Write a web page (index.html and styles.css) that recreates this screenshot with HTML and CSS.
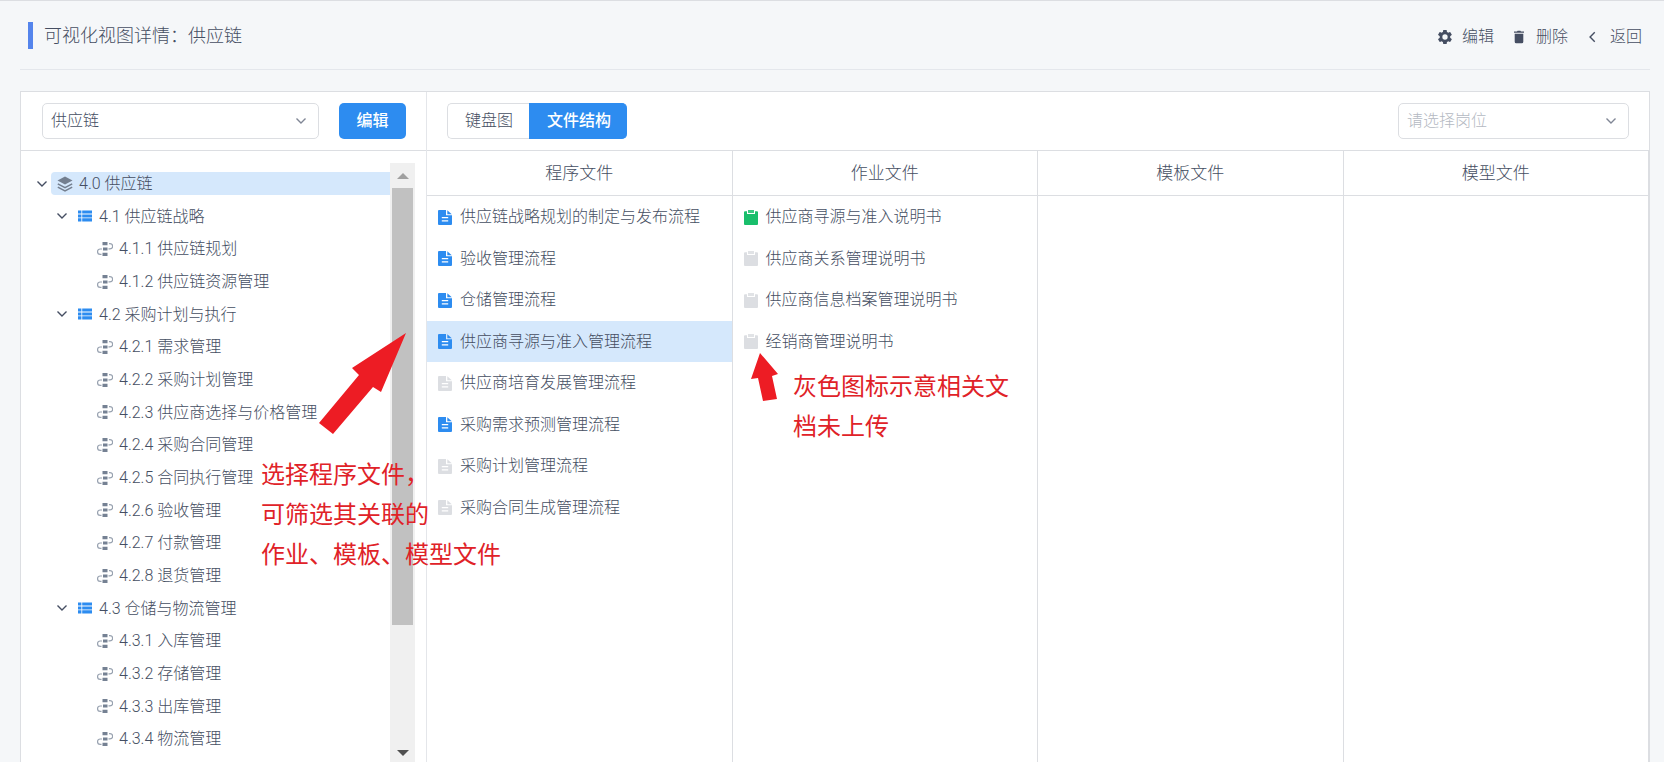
FILE: index.html
```html
<!DOCTYPE html>
<html lang="zh-CN">
<head>
<meta charset="utf-8">
<title>可视化视图详情</title>
<link rel="stylesheet" href="styles.css">
</head>
<body>
<svg class="sprite" aria-hidden="true">
  <symbol id="chevron" viewBox="0 0 12 12"><path d="M1.5 3.5 6 8l4.500-4.500" fill="none" stroke="currentColor" stroke-width="1.400"/></symbol>
  <symbol id="back" viewBox="0 0 12 12"><path d="M7.500 2 3.500 6l4 4" fill="none" stroke="currentColor" stroke-width="1.200"/></symbol>
  <symbol id="gear" viewBox="2 2 20 20"><path fill="currentColor" d="M19.400 13a7.500 7.500 0 0 0 0-2l2.100-1.700c.2-.2.300-.4.100-.7l-2-3.400c-.1-.2-.4-.3-.6-.2l-2.500 1a7.300 7.300 0 0 0-1.700-1l-.4-2.600c0-.3-.2-.4-.5-.4h-4c-.2 0-.4.1-.5.4L9 5c-.6.200-1.200.6-1.700 1l-2.500-1c-.2-.1-.5 0-.6.2l-2 3.400c-.1.300 0 .5.100.7L4.500 11a8 8 0 0 0 0 2l-2.200 1.700c-.1.200-.2.400-.1.700l2 3.400c.1.200.4.300.6.200l2.500-1c.5.400 1.100.8 1.700 1l.4 2.600c.1.300.3.400.5.400h4c.3 0 .5-.1.500-.4l.4-2.600c.6-.2 1.200-.6 1.700-1l2.500 1c.2.100.5 0 .6-.2l2-3.400c.2-.3.100-.5-.1-.7zM12 15.800a3.800 3.800 0 1 1 0-7.600 3.800 3.800 0 0 1 0 7.600z"/></symbol>
  <symbol id="trash" viewBox="0 0 12 14"><path fill="currentColor" d="M1 1.500h3L4.600.7h2.800l.6.800h3v1.300H1zM1.700 3.700h8.600v8q0 1.500-1.500 1.500H3.200q-1.500 0-1.500-1.500z"/></symbol>
  <symbol id="layers" viewBox="0 0 16 16"><path fill="currentColor" d="M8 .5 15.500 4.500 8 8.500.5 4.500z"/><path fill="none" stroke="currentColor" stroke-width="1.500" d="m.8 7.900 7.200 3.800 7.200-3.800M.8 11.200 8 15l7.200-3.800"/></symbol>
  <symbol id="list" viewBox="0 0 14 12"><path fill="currentColor" d="M0 .5h3.400v3H0zM4.200.5H14v3H4.200zM0 4.400h3.400v3H0zM4.200 4.400H14v3H4.200zM0 8.300h3.400v3.200H0zM4.200 8.300H14v3.200H4.200z"/></symbol>
  <symbol id="flow" viewBox="0 0 16 14"><path fill="#758193" d="M5.500 0h5v3.200h-5zM6 5.400h4.500v3H6zM5.500 10.800h5V14h-5z"/><path fill="none" stroke="#98a2b0" stroke-width="1.200" d="M12 1.600h1a2.600 2.600 0 0 1 0 5.300h-1.500M5 7H3.200a2.600 2.600 0 0 0 0 5.300h1.300"/></symbol>
  <symbol id="doc" viewBox="0 0 14 15"><path fill="currentColor" d="M1 0h7v5.300h6V14q0 1-1 1H1q-1 0-1-1V1Q0 0 1 0z"/><path fill="currentColor" d="M9.300.2 13.800 4.300H9.300z"/><path d="M3.800 7.600h6.400M3.800 10.800h6.400" stroke="#fff" stroke-width="1.300"/></symbol>
  <symbol id="clip" viewBox="0 0 14 15"><path fill="currentColor" d="M1 1.200h2V4h8V1.200h2q1 0 1 1V14q0 1-1 1H1q-1 0-1-1V2.200q0-1 1-1z"/><path fill="currentColor" opacity=".85" d="M4 0h6v3H4z"/></symbol>
</svg>

<div class="page">
  <header class="page-head">
    <h1>可视化视图详情：供应链</h1>
    <nav class="actions">
      <button type="button"><svg class="i14"><use href="#gear"/></svg>编辑</button>
      <button type="button"><svg class="i14"><use href="#trash"/></svg>删除</button>
      <button type="button"><svg class="i14"><use href="#back"/></svg>返回</button>
    </nav>
  </header>

  <main class="card">
    <aside class="side">
      <div class="toolbar">
        <div class="picker grow">
          <select aria-label="视图"><option>供应链</option></select>
          <svg><use href="#chevron"/></svg>
        </div>
        <button type="button" class="primary">编辑</button>
      </div>
      <div class="tree-area">
        <ul class="tree">
          <li class="l0"><svg class="chev"><use href="#chevron"/></svg><span class="node on"><svg class="i16"><use href="#layers"/></svg>4.0 供应链</span></li>
          <li class="l1"><svg class="chev"><use href="#chevron"/></svg><span class="node"><svg class="i14"><use href="#list"/></svg>4.1 供应链战略</span></li>
          <li class="l2"><span class="node"><svg class="i16"><use href="#flow"/></svg>4.1.1 供应链规划</span></li>
          <li class="l2"><span class="node"><svg class="i16"><use href="#flow"/></svg>4.1.2 供应链资源管理</span></li>
          <li class="l1"><svg class="chev"><use href="#chevron"/></svg><span class="node"><svg class="i14"><use href="#list"/></svg>4.2 采购计划与执行</span></li>
          <li class="l2"><span class="node"><svg class="i16"><use href="#flow"/></svg>4.2.1 需求管理</span></li>
          <li class="l2"><span class="node"><svg class="i16"><use href="#flow"/></svg>4.2.2 采购计划管理</span></li>
          <li class="l2"><span class="node"><svg class="i16"><use href="#flow"/></svg>4.2.3 供应商选择与价格管理</span></li>
          <li class="l2"><span class="node"><svg class="i16"><use href="#flow"/></svg>4.2.4 采购合同管理</span></li>
          <li class="l2"><span class="node"><svg class="i16"><use href="#flow"/></svg>4.2.5 合同执行管理</span></li>
          <li class="l2"><span class="node"><svg class="i16"><use href="#flow"/></svg>4.2.6 验收管理</span></li>
          <li class="l2"><span class="node"><svg class="i16"><use href="#flow"/></svg>4.2.7 付款管理</span></li>
          <li class="l2"><span class="node"><svg class="i16"><use href="#flow"/></svg>4.2.8 退货管理</span></li>
          <li class="l1"><svg class="chev"><use href="#chevron"/></svg><span class="node"><svg class="i14"><use href="#list"/></svg>4.3 仓储与物流管理</span></li>
          <li class="l2"><span class="node"><svg class="i16"><use href="#flow"/></svg>4.3.1 入库管理</span></li>
          <li class="l2"><span class="node"><svg class="i16"><use href="#flow"/></svg>4.3.2 存储管理</span></li>
          <li class="l2"><span class="node"><svg class="i16"><use href="#flow"/></svg>4.3.3 出库管理</span></li>
          <li class="l2"><span class="node"><svg class="i16"><use href="#flow"/></svg>4.3.4 物流管理</span></li>
        </ul>
        <div class="scrollbar" aria-hidden="true">
          <i class="up"></i>
          <div class="track"><div class="thumb"></div></div>
          <i class="down"></i>
        </div>
      </div>
    </aside>

    <section class="content">
      <div class="toolbar">
        <div class="tabs">
          <button type="button">键盘图</button>
          <button type="button" class="active">文件结构</button>
        </div>
        <div class="picker post">
          <select class="empty" aria-label="岗位"><option>请选择岗位</option></select>
          <svg><use href="#chevron"/></svg>
        </div>
      </div>
      <div class="columns">
        <section class="column">
          <h2>程序文件</h2>
          <ul class="files">
            <li class="blue"><svg><use href="#doc"/></svg>供应链战略规划的制定与发布流程</li>
            <li class="blue"><svg><use href="#doc"/></svg>验收管理流程</li>
            <li class="blue"><svg><use href="#doc"/></svg>仓储管理流程</li>
            <li class="blue selected"><svg><use href="#doc"/></svg>供应商寻源与准入管理流程</li>
            <li><svg><use href="#doc"/></svg>供应商培育发展管理流程</li>
            <li class="blue"><svg><use href="#doc"/></svg>采购需求预测管理流程</li>
            <li><svg><use href="#doc"/></svg>采购计划管理流程</li>
            <li><svg><use href="#doc"/></svg>采购合同生成管理流程</li>
          </ul>
        </section>
        <section class="column">
          <h2>作业文件</h2>
          <ul class="files">
            <li class="green"><svg><use href="#clip"/></svg>供应商寻源与准入说明书</li>
            <li><svg><use href="#clip"/></svg>供应商关系管理说明书</li>
            <li><svg><use href="#clip"/></svg>供应商信息档案管理说明书</li>
            <li><svg><use href="#clip"/></svg>经销商管理说明书</li>
          </ul>
        </section>
        <section class="column"><h2>模板文件</h2></section>
        <section class="column"><h2>模型文件</h2></section>
      </div>
    </section>
  </main>
</div>

<svg class="arrow arrow-select" viewBox="0 0 88 102" aria-hidden="true"><path d="M87 1 33 36l7 7L0 91l14 11 40-47 8 5z"/></svg>
<p class="note note-select">选择程序文件，<br>可筛选其关联的<br>作业、模板、模型文件</p>
<svg class="arrow arrow-gray" viewBox="0 0 28 48" aria-hidden="true"><path d="M9 0 0 26l7-1 5 23 14-2-5-23 6-2z"/></svg>
<p class="note note-gray">灰色图标示意相关文<br>档未上传</p>
</body>
</html>
```
FILE: styles.css
```css
* { box-sizing: border-box; }
body {
  margin: 0;
  background: #f5f7f9;
  color: #454e62;
  font: 300 16px/24px Roboto, "Noto Sans CJK SC", sans-serif;
  overflow: hidden;
}
h1, h2, ul, p { margin: 0; padding: 0; font-weight: inherit; }
ul { list-style: none; }
svg { display: block; flex: none; }
button, select { font: inherit; color: inherit; }
.sprite { position: absolute; width: 0; height: 0; }
.i14 { width: 14px; height: 14px; }
.i16 { width: 16px; height: 16px; }

.page {
  display: flex;
  flex-direction: column;
  height: 100vh;
  padding: 0 14px 0 20px;
  border-top: 1px solid #dcdee2;
}
.page-head {
  flex: none;
  display: flex;
  align-items: center;
  justify-content: space-between;
  height: 69px;
  padding: 0 8px;
  border-bottom: 1px solid #e4e7ec;
}
.page-head h1 {
  border-left: 5px solid #5484ec;
  padding-left: 11px;
  font-size: 18px;
  line-height: 27px;
}
.actions { display: flex; gap: 18px; padding-top: 4px; }
.actions button {
  display: flex;
  align-items: center;
  gap: 10px;
  padding: 0;
  border: 0;
  background: none;
}

.card {
  flex: 1;
  min-height: 0;
  display: flex;
  margin-top: 21px;
  border: 1px solid #dcdee2;
  border-bottom: 0;
  background: #fff;
}
.side {
  flex: none;
  width: 406px;
  display: flex;
  flex-direction: column;
  border-right: 1px solid #e4e6ea;
}
.content { flex: 1; min-width: 0; display: flex; flex-direction: column; }
.toolbar {
  flex: none;
  display: flex;
  align-items: center;
  justify-content: space-between;
  gap: 20px;
  height: 59px;
  padding: 0 20px;
  border-bottom: 1px solid #dcdee2;
}
.side .toolbar { padding-left: 21px; }
.picker { display: grid; align-items: center; }
.picker > * { grid-area: 1 / 1; }
.picker select {
  appearance: none;
  width: 100%;
  height: 36px;
  padding: 0 8px;
  border: 1px solid #dcdee2;
  border-radius: 5px;
  background: #fff;
}
.picker select.empty { color: #b4b9c2; }
.picker svg {
  justify-self: end;
  width: 12px;
  height: 12px;
  margin-right: 12px;
  color: #808695;
  pointer-events: none;
}
.grow { flex: 1; }
.post { width: 231px; }
.primary {
  width: 67px;
  height: 36px;
  padding: 0;
  border: 0;
  border-radius: 5px;
  background: #2d8cf0;
  color: #fff;
  font-weight: 500;
}
.tabs { display: flex; }
.tabs button {
  height: 36px;
  padding: 0 16px 0 17px;
  border: 1px solid #dcdee2;
  border-right: 0;
  border-radius: 5px 0 0 5px;
  background: #fff;
}
.tabs .active {
  border-color: #2d8cf0;
  border-radius: 0 5px 5px 0;
  background: #2d8cf0;
  color: #fff;
  font-weight: 500;
}

.tree-area {
  flex: 1;
  min-height: 0;
  display: flex;
  padding: 12px 11px 0 15px;
}
.tree { flex: 1; min-width: 0; padding-top: 4px; }
.tree li { display: flex; align-items: center; height: 33px; }
.tree li:nth-child(3n + 2) { height: 32px; }
.tree .l1 { padding-left: 20px; }
.tree .l2 { padding-left: 54px; }
.chev { width: 12px; height: 12px; margin-right: 3px; }
.node {
  flex: 1;
  display: flex;
  align-items: center;
  gap: 6px;
  padding-left: 7px;
  line-height: 23px;
  white-space: nowrap;
}
.l1 .node { gap: 7px; }
.node.on { padding-left: 6px; border-radius: 4px 0 0 4px; background: #d5e8fc; }
.on svg { color: #747f8f; }
.l1 .i14 { color: #2d8cf0; }
.scrollbar {
  flex: none;
  width: 25px;
  display: flex;
  flex-direction: column;
  align-items: center;
  background: #f0f0f0;
}
.scrollbar i { border: 6px solid transparent; border-top-width: 0; }
.scrollbar .up { margin: 10px 0 9px; border-bottom-color: #a0a0a0; }
.scrollbar .down { margin: 9px 0 6px; border-width: 6px 6px 0; border-top-color: #505050; }
.track { flex: 1; width: 21px; }
.thumb { height: 79%; background: #c1c1c1; }

.columns { flex: 1; display: grid; grid-template-columns: repeat(4, 1fr); }
.column { border-right: 1px solid #dcdee2; }
.column h2 {
  height: 45px;
  border-bottom: 1px solid #dcdee2;
  font-size: 17px;
  line-height: 44px;
  text-align: center;
}
.files li {
  display: flex;
  align-items: center;
  gap: 8px;
  height: 41px;
  padding-left: 11px;
}
.files li:nth-child(odd) { height: 42px; }
.files svg { width: 14px; height: 15px; color: #dcdee2; }
.files .blue svg { color: #2d8cf0; }
.files .green svg { color: #19be6b; }
.files .selected { background: #d5e8fc; }

.arrow { position: absolute; fill: #ed1c24; }
.arrow-select { left: 319px; top: 332px; width: 88px; height: 102px; }
.arrow-gray { left: 751px; top: 353px; width: 28px; height: 48px; }
.note {
  position: absolute;
  color: #e02228;
  font-size: 24px;
  font-weight: 400;
  line-height: 40px;
  white-space: nowrap;
}
.note-select { left: 261px; top: 455px; }
.note-gray { left: 793px; top: 367px; }
```
